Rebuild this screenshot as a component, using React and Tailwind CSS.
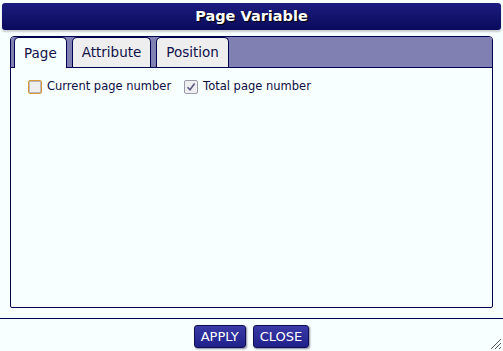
import React, { useState } from 'react';

const tabs = ['Page', 'Attribute', 'Position'];

function Checkbox({ checked, focused, onChange }) {
  return (
    <span
      onClick={onChange}
      className={
        'flex items-center justify-center w-[14px] h-[14px] rounded-[2px] border ' +
        (focused ? 'border-[#d89a38] bg-[#eeeeee] shadow-[inset_0_0_0_1px_#b8b8c0]' : 'border-[#9a9aa8] bg-[#eeeef2]')
      }
    >
      {checked && (
        <svg width="10" height="10" viewBox="0 0 10 10">
          <path d="M1.5 5.2 L4 7.8 L8.6 1.6" fill="none" stroke="#5a5a80" strokeWidth="1.6" />
        </svg>
      )}
    </span>
  );
}

export default function App() {
  const [active, setActive] = useState(0);
  const [current, setCurrent] = useState(false);
  const [total, setTotal] = useState(true);

  return (
    <div className="w-[503px] h-[351px] bg-[#f8ffff] flex flex-col overflow-hidden relative" style={{ fontFamily: '"DejaVu Sans", Verdana, sans-serif' }}>
      <div className="mx-[2px] mt-[3px] h-[27px] rounded-[3px] bg-gradient-to-b from-[#1c1c80] to-[#0a0a5c] flex items-center justify-center shadow-[0_2px_2px_#c8ccd0]">
        <span className="text-white font-bold text-[14.5px] [text-shadow:1px_1px_1px_#000]">Page Variable</span>
      </div>

      <div className="mx-[10px] mt-[6px] h-[272px] flex flex-col border border-[#000050] rounded-t-[4px] rounded-b-[2px] bg-[#f8ffff] overflow-hidden">
        <div className="h-[31px] bg-[#8080b2] border-b border-[#000050] flex items-end pl-[3px] gap-[5px]">
          {tabs.map((t, i) => (
            <button
              key={t}
              onClick={() => setActive(i)}
              className={
                'h-[30px] px-[9px] rounded-t-[5px] border border-b-0 border-[#000050] text-[13.5px] text-[#10104a] ' +
                (i === active ? 'bg-[#f8ffff] -mb-px h-[31px]' : 'bg-[#eeeeee]')
              }
              style={{ fontFamily: '"DejaVu Sans", Verdana, sans-serif' }}
            >
              {t}
            </button>
          ))}
        </div>
        <div className="flex-1 px-[17px] pt-[10px]">
          <div className="flex items-center text-[11.5px] text-[#0c0c44]">
            <Checkbox checked={current} focused onChange={() => setCurrent(!current)} />
            <span className="ml-[5px]">Current page number</span>
            <span className="ml-[13px]" />
            <Checkbox checked={total} onChange={() => setTotal(!total)} />
            <span className="ml-[5px]">Total page number</span>
          </div>
        </div>
      </div>

      <div className="mt-[10px] border-t border-[#000050]" />
      <div className="flex justify-center gap-[7px] mt-[6px]">
        <button className="h-[23px] px-[6px] rounded-[3px] border border-[#101050] bg-gradient-to-b from-[#3a3aa8] to-[#20208a] text-white text-[13px] shadow-[1px_1px_2px_#8888a0]" style={{ fontFamily: '"DejaVu Sans", Verdana, sans-serif' }}>APPLY</button>
        <button className="h-[23px] px-[6px] rounded-[3px] border border-[#101050] bg-gradient-to-b from-[#3a3aa8] to-[#20208a] text-white text-[13px] shadow-[1px_1px_2px_#8888a0]" style={{ fontFamily: '"DejaVu Sans", Verdana, sans-serif' }}>CLOSE</button>
      </div>

      <svg className="absolute right-[1px] bottom-[1px]" width="13" height="13" viewBox="0 0 13 13">
        <path d="M12 2 L2 12 M12 6 L6 12 M12 10 L10 12" stroke="#555" strokeWidth="1" />
      </svg>
    </div>
  );
}
